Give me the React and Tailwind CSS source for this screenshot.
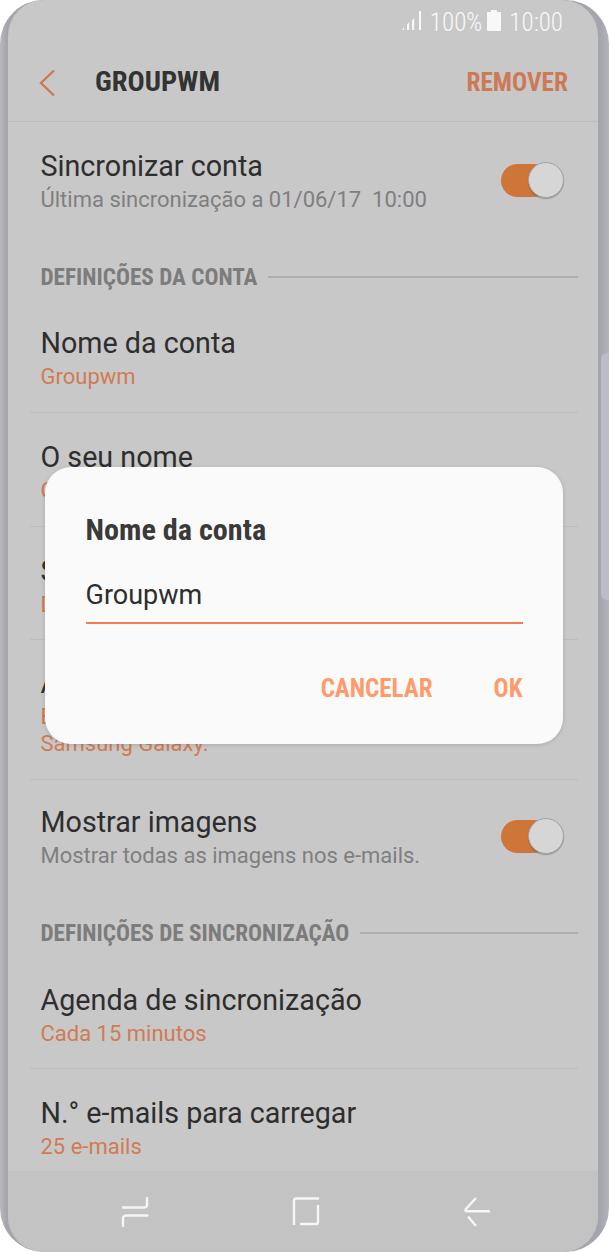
import React from "react";

const cond = "[font-stretch:75%]";

function Toggle() {
  return (
    <div className="relative h-[37px] w-[63px] shrink-0">
      <div className="absolute left-0 top-[2px] h-[33px] w-[50px] rounded-full bg-[#cf7539]" />
      <div className="absolute right-0 top-0 h-[36px] w-[36px] rounded-full border border-[#a3a3a3] bg-[#d6d6d6] shadow-[0_1px_1px_rgba(0,0,0,0.25)]" />
    </div>
  );
}

function Row({ title, sub, subColor = "text-[#d07b54]", h, toggle, divider = true, pt = 26 }) {
  return (
    <div className={`ml-[22px] mr-[20px] shrink-0 ${divider ? "border-b border-[#bdbdbd]" : ""}`} style={{ height: h, paddingTop: pt }}>
      <div className="flex items-center justify-between pl-[10.5px] pr-[14px]">
        <div>
          <div className="text-[28.7px] leading-[36px] text-[#2e2e2e]">{title}</div>
          <div className={`mt-[2px] whitespace-pre-wrap text-[22px] leading-[27px] ${subColor}`}>{sub}</div>
        </div>
        {toggle && <Toggle />}
      </div>
    </div>
  );
}

function Section({ label }) {
  return (
    <div className="flex h-[45px] shrink-0 items-center gap-[11px] pl-[32.5px] pr-[20px]">
      <span className={`mt-[2px] text-[23.2px] font-bold leading-none text-[#7c7c7c] ${cond}`}>{label}</span>
      <div className="h-[2px] flex-1 bg-[#aeaeae]" />
    </div>
  );
}

export default function App() {
  return (
    <div className="relative h-[1252px] w-[609px] overflow-hidden bg-white font-['Roboto',sans-serif]">
      <div className="flex h-full w-full overflow-hidden rounded-[44px] bg-[linear-gradient(to_right,#b9babe_0px,#a4a5ad_7px,#a4a5ad_600px,#b4b5bb_609px)]">
        <div className="relative ml-[8px] mr-[11px] flex h-full flex-1 flex-col overflow-hidden rounded-[36px] bg-[#c8c8c8]">
          {/* status bar */}
          <div className="flex h-[44px] shrink-0 items-start justify-end pr-[35px] pt-[8px] text-[25px] font-light leading-[30px] text-[#f8f8f8]">
            <svg width="20" height="20" viewBox="0 0 20 20" className="mt-[3px]">
              <path d="M0 19h2v-3zM5 19h2.200v-8L5 13.500zM10 19h2.200V7L10 9.500zM17 19h2V0h-2z" fill="#f8f8f8" />
            </svg>
            <span className={`ml-[8px] ${cond}`}>100%</span>
            <svg width="14" height="21" viewBox="0 0 14 21" className="ml-[5px] mt-[2px]">
              <path d="M4 0h6v2h3a1 1 0 0 1 1 1v17a1 1 0 0 1-1 1H1a1 1 0 0 1-1-1V3a1 1 0 0 1 1-1h3z" fill="#f8f8f8" />
            </svg>
            <span className={`ml-[8px] ${cond}`}>10:00</span>
          </div>

          {/* app bar */}
          <div className="flex h-[78px] shrink-0 items-center justify-between border-b border-[#bdbdbd] pl-[30px] pr-[30px]">
            <div className="flex items-center">
              <svg width="18" height="28" viewBox="0 0 18 28" fill="none" stroke="#cc7a55" strokeWidth="2.4">
                <path d="M16 1.500 3 14l13 12.500" />
              </svg>
              <span className={`ml-[39px] text-[28.5px] font-bold text-[#333333] ${cond}`}>GROUPWM</span>
            </div>
            <span className={`text-[25.300px] font-bold text-[#cc7a55] ${cond}`}>REMOVER</span>
          </div>

          {/* list */}
          <Row title="Sincronizar conta" sub="Última sincronização a 01/06/17  10:00" subColor="text-[#7f7f7f]" h={132} toggle divider={false} />
          <Section label="DEFINIÇÕES DA CONTA" />
          <Row title="Nome da conta" sub="Groupwm" h={114} />
          <Row title="O seu nome" sub="Groupwm" h={114} />
          <Row title="Sinal" sub="Definir" h={113} />
          <Row title="Assinatura" sub={"Enviado a partir do meu\nSamsung Galaxy."} h={140} pt={25} />
          <Row title="Mostrar imagens" sub="Mostrar todas as imagens nos e-mails." subColor="text-[#7f7f7f]" h={130} toggle divider={false} pt={24} />
          <Section label="DEFINIÇÕES DE SINCRONIZAÇÃO" />
          <Row title="Agenda de sincronização" sub="Cada 15 minutos" h={114} pt={27} />
          <Row title="N.° e-mails para carregar" sub="25 e-mails" h={102} divider={false} />

          {/* nav bar */}
          <div className="absolute bottom-0 left-0 right-0 flex h-[81px] items-start bg-[#c3c3c3] pl-[113px] pt-[26px]">
            <svg width="28" height="30" viewBox="0 0 28 30" fill="none" stroke="#f6f6f6" strokeWidth="2.4" strokeLinecap="round">
              <path d="M26 1v7a2.500 2.500 0 0 1-2.500 2.500H2M26.500 18.500H5a3 3 0 0 0-3 3V29" />
            </svg>
            <svg width="28" height="29" viewBox="0 0 28 29" fill="none" stroke="#f6f6f6" strokeWidth="2.4" className="ml-[143px]">
              <path d="M27 1.500H4a2 2 0 0 0-2 2V28M26 8v17a2 2 0 0 1-2 2H8" />
            </svg>
            <svg width="28" height="30" viewBox="0 0 28 30" fill="none" stroke="#f6f6f6" strokeWidth="2.4" className="ml-[143px]">
              <path d="M13 1 2.500 12.500a1.200 1.200 0 0 0 1 1.800H27M5 19.500l8 9.500" />
            </svg>
          </div>
        </div>
      </div>

      {/* side button */}
      <div className="absolute right-0 top-[353px] h-[247px] w-[8px] rounded-l-[6px] bg-[#bbbcc7]" />

      {/* dialog */}
      <div className="absolute left-[45px] top-[467px] h-[277px] w-[518px] rounded-[26px] bg-[#fafafa] shadow-[0_1px_4px_rgba(0,0,0,0.15)]">
        <div className={`absolute left-[40.500px] top-[45px] text-[30.200px] font-bold leading-[36px] text-[#3a3a3a] ${cond}`}>Nome da conta</div>
        <div className="absolute left-[40.500px] right-[40px] top-[108px] h-[49px] border-b-2 border-[#ef7d50] text-[27px] leading-[40px] text-[#2e2e2e]">Groupwm</div>
        <div className={`absolute right-[40.500px] top-[206px] flex gap-[61px] text-[25px] font-bold leading-[32px] text-[#ff9a6c] ${cond}`}>
          <span>CANCELAR</span>
          <span>OK</span>
        </div>
      </div>
    </div>
  );
}
